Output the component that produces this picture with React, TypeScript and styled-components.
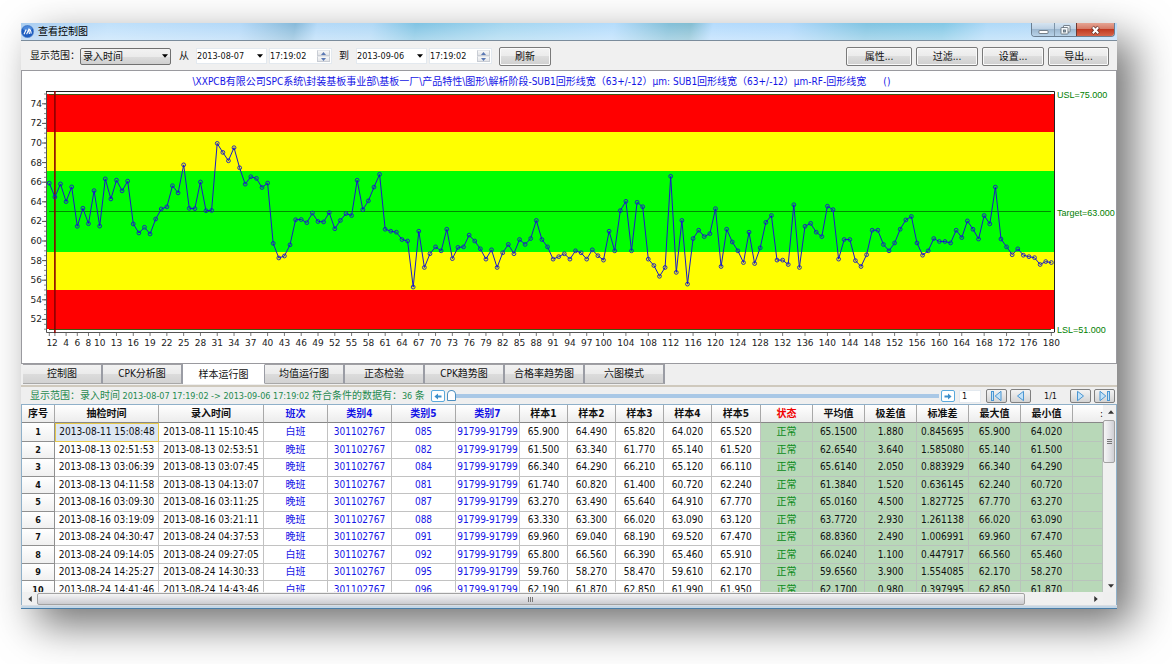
import React, { useState } from 'react';
import styled, { createGlobalStyle, css } from 'styled-components';

const uiFont = '"DejaVu Sans Condensed", "Noto Sans CJK SC", sans-serif';
const chartFont = '"DejaVu Sans", "Noto Sans CJK SC", sans-serif';

const GlobalStyle = createGlobalStyle`
  * { box-sizing: border-box; }
  body { margin: 0; background: #fff; font-family: ${uiFont}; font-size: 10px; color: #111; }
  button, input, select { font-family: inherit; font-size: inherit; color: inherit; margin: 0; }
`;

/* ---------- data ---------- */

type Row = {
  taken: string;
  entered: string;
  shift: string;
  cat5: string;
  samples: number[];
  avg: string;
  range: string;
  dev: string;
  max: string;
  min: string;
};

const rows: Row[] = [
  { taken: '2013-08-11 15:08:48', entered: '2013-08-11 15:10:45', shift: '白班', cat5: '085', samples: [65.9, 64.49, 65.82, 64.02, 65.52], avg: '65.1500', range: '1.880', dev: '0.845695', max: '65.900', min: '64.020' },
  { taken: '2013-08-13 02:51:53', entered: '2013-08-13 02:53:51', shift: '晚班', cat5: '082', samples: [61.5, 63.34, 61.77, 65.14, 61.52], avg: '62.6540', range: '3.640', dev: '1.585080', max: '65.140', min: '61.500' },
  { taken: '2013-08-13 03:06:39', entered: '2013-08-13 03:07:45', shift: '晚班', cat5: '084', samples: [66.34, 64.29, 66.21, 65.12, 66.11], avg: '65.6140', range: '2.050', dev: '0.883929', max: '66.340', min: '64.290' },
  { taken: '2013-08-13 04:11:58', entered: '2013-08-13 04:13:07', shift: '晚班', cat5: '081', samples: [61.74, 60.82, 61.4, 60.72, 62.24], avg: '61.3840', range: '1.520', dev: '0.636145', max: '62.240', min: '60.720' },
  { taken: '2013-08-16 03:09:30', entered: '2013-08-16 03:11:25', shift: '晚班', cat5: '087', samples: [63.27, 63.49, 65.64, 64.91, 67.77], avg: '65.0160', range: '4.500', dev: '1.827725', max: '67.770', min: '63.270' },
  { taken: '2013-08-16 03:19:09', entered: '2013-08-16 03:21:11', shift: '晚班', cat5: '088', samples: [63.33, 63.3, 66.02, 63.09, 63.12], avg: '63.7720', range: '2.930', dev: '1.261138', max: '66.020', min: '63.090' },
  { taken: '2013-08-24 04:30:47', entered: '2013-08-24 04:37:53', shift: '晚班', cat5: '091', samples: [69.96, 69.04, 68.19, 69.52, 67.47], avg: '68.8360', range: '2.490', dev: '1.006991', max: '69.960', min: '67.470' },
  { taken: '2013-08-24 09:14:05', entered: '2013-08-24 09:27:05', shift: '白班', cat5: '092', samples: [65.8, 66.56, 66.39, 65.46, 65.91], avg: '66.0240', range: '1.100', dev: '0.447917', max: '66.560', min: '65.460' },
  { taken: '2013-08-24 14:25:27', entered: '2013-08-24 14:30:33', shift: '白班', cat5: '095', samples: [59.76, 58.27, 58.47, 59.61, 62.17], avg: '59.6560', range: '3.900', dev: '1.554085', max: '62.170', min: '58.270' },
  { taken: '2013-08-24 14:41:46', entered: '2013-08-24 14:43:46', shift: '白班', cat5: '096', samples: [62.19, 61.87, 62.85, 61.99, 61.95], avg: '62.1700', range: '0.980', dev: '0.397995', max: '62.850', min: '61.870' },
];

const laterSamples = [
  62.9, 61.25, 62.1, 62.8, 62.6, 66.2, 63.2, 64.1, 65.5, 66.8,
  61.2, 61.0, 60.9, 60.15, 60.0, 55.3, 61.0, 57.3, 58.7, 59.4,
  59.0, 61.2, 58.2, 59.35, 59.4, 60.6, 60.0, 59.2, 58.15, 59.1,
  57.3, 58.8, 59.65, 58.7, 60.15, 59.65, 60.25, 62.1, 60.15, 59.4,
  58.15, 58.4, 58.7, 58.15, 59.0, 58.8, 58.15, 59.1, 58.5, 58.05,
  61.0, 59.0, 63.1, 64.05, 59.0, 63.95, 63.5, 58.15, 57.5, 56.4,
  57.3, 66.6, 56.8, 62.1, 55.6, 60.25, 61.1, 60.45, 60.75, 63.3,
  57.4, 61.2, 59.9, 59.0, 57.8, 60.9, 57.7, 59.3, 61.9, 62.6,
  58.05, 58.05, 57.6, 63.7, 57.3, 61.5, 61.8, 60.9, 60.45, 63.55,
  63.2, 58.15, 60.15, 60.15, 58.0, 57.4, 58.6, 61.1, 61.1, 59.65,
  59.0, 59.8, 61.2, 62.15, 62.5, 59.8, 58.55, 59.0, 60.25, 59.95,
  59.95, 59.8, 61.1, 60.35, 62.05, 61.2, 60.2, 62.6, 61.75, 65.5,
  60.2, 59.4, 58.6, 59.2, 58.55, 58.4, 58.3, 57.6, 57.9, 57.8,
];

const samples = rows.flatMap(r => r.samples).concat(laterSamples);

/* ---------- window ---------- */

const Page = styled.div`
  padding: 23px 55px 55px 21px;
`;

const Window = styled.main`
  display: flex;
  flex-direction: column;
  background: #efefef;
  box-shadow: 16px 16px 40px rgba(0, 0, 0, 0.56);
`;

const TitleBar = styled.header`
  display: flex;
  align-items: center;
  height: 18px;
  border-bottom: 1px solid #7b8c9c;
  background:
    linear-gradient(to bottom, rgba(255, 255, 255, 0), rgba(255, 255, 255, 0.35)),
    linear-gradient(100deg, #a9cdf0 0%, #bfe0fb 8%, #b2d8f8 20%, #86b9d9 25%, #b3d9f8 27%,
      #afd8f6 32%, #7fc3e3 36%, #a4d6f0 44%, #b4dcfc 54%, #82bfd8 59%, #83bdd2 61%, #b4dbfd 63%,
      #afd8fb 70%, #80c4e2 77%, #83c8e6 84%, #aed9f8 88%, #b9dafa 100%);
`;

const AppIcon = styled.svg`
  width: 13px;
  height: 13px;
  flex: none;
`;

const Title = styled.h1`
  margin: 0 0 0 4px;
  flex: 1;
  font-size: 10px;
  font-weight: 400;
  line-height: 16px;
  color: #000;
`;

const CaptionButtons = styled.div`
  display: flex;
  align-self: flex-start;
  height: 14px;
  margin-right: 2px;
  border: 1px solid #6b7f92;
  border-top: 0;
  border-radius: 0 0 4px 4px;
  overflow: hidden;
`;

const CaptionButton = styled.button<{ $close?: boolean }>`
  display: flex;
  align-items: center;
  justify-content: center;
  width: ${p => (p.$close ? 38 : 22)}px;
  padding: 0;
  border: 0;
  border-left: 1px solid ${p => (p.$close ? '#6b3a33' : '#7f95a8')};
  background: ${p =>
    p.$close
      ? 'linear-gradient(#e5a493 0%, #d67a66 45%, #c03a22 50%, #d5644a 100%)'
      : 'linear-gradient(#d5e4f1 0%, #bdd1e4 45%, #9db8d0 50%, #b8d2e8 100%)'};
  &:first-child { border-left: 0; }
  svg { display: block; }
`;

/* ---------- toolbar ---------- */

const Toolbar = styled.form`
  display: flex;
  align-items: center;
  height: 29px;
  padding: 1px 8px 0 9px;
  background: #f0f0f0;
`;

const Label = styled.label`
  line-height: 16px;
  white-space: nowrap;
`;

const Word = styled.span`
  line-height: 16px;
  margin-right: 7px;
`;

const SelectBox = styled.span`
  position: relative;
  display: flex;
  width: 91px;
  margin-right: 8px;
  svg { position: absolute; right: 3px; top: 6px; pointer-events: none; }
`;

const Select = styled.select`
  appearance: none;
  width: 100%;
  height: 17px;
  padding: 0 2px;
  border: 1px solid #707070;
  border-radius: 2px;
  background: linear-gradient(#f2f2f2 0%, #ebebeb 50%, #dddddd 51%, #cfcfcf 100%);
`;

const Field = styled.span<{ $width: number; $gap: number }>`
  display: flex;
  align-items: center;
  width: ${p => p.$width}px;
  height: 16px;
  margin-right: ${p => p.$gap}px;
  background: #fff;
  border: 1px solid #e3e9ef;
`;

const FieldInput = styled.input`
  flex: 1;
  min-width: 0;
  height: 14px;
  padding: 0;
  border: 0;
  background: none;
  font-size: 9px;
`;

const DropButton = styled.button`
  display: flex;
  align-items: center;
  justify-content: center;
  width: 12px;
  height: 14px;
  padding: 0;
  border: 0;
  background: none;
`;

const Spinner = styled.span`
  display: flex;
  flex-direction: column;
  width: 13px;
  margin-right: 1px;
`;

const SpinButton = styled.button`
  display: flex;
  align-items: center;
  justify-content: center;
  height: 6px;
  padding: 0;
  border: 1px solid #c9cdd4;
  border-top-color: #e4e6ea;
  background: linear-gradient(#f8f8f8, #e2e4e8);
`;

const PushButton = styled.button<{ $width: number }>`
  width: ${p => p.$width}px;
  height: 19px;
  padding: 1px 0 0;
  border: 1px solid #7a7a7a;
  border-radius: 2px;
  background: linear-gradient(#f3f3f3 0%, #ebebeb 49%, #dddddd 50%, #cfcfcf 100%);
  box-shadow: inset 0 0 0 1px #fafafa;
  line-height: 16px;
`;

const Actions = styled.div`
  display: flex;
  gap: 4px;
  margin-left: auto;
`;

/* ---------- chart ---------- */

const ChartPanel = styled.section`
  border: 1px solid #9a9a9f;
  background: #fff;
`;

const ChartTitle = styled.h2`
  margin: 0;
  padding-right: 55px;
  font-size: 10px;
  font-weight: 400;
  line-height: 21px;
  height: 19px;
  text-align: center;
  white-space: pre;
  color: #1414e6;
`;

const ChartSvg = styled.svg`
  display: block;
  width: 100%;
  height: auto;
  font-family: ${chartFont};
  font-size: 9px;
`;

const px = (n: number) => 27.3 + (n - 1) * 5.598;
const py = (v: number) => 4 + (75 - v) * 9.8;

const bands = [
  { top: 4, bottom: 42, color: '#ff0000' },
  { top: 42, bottom: 81, color: '#ffff00' },
  { top: 81, bottom: 162, color: '#00ff00' },
  { top: 162, bottom: 200, color: '#ffff00' },
  { top: 200, bottom: 239, color: '#ff0000' },
];

const xLabels = [1, 2, 4, 6, 8, 10];
for (let n = 13; n <= 100; n += 3) xLabels.push(n);
for (let n = 104; n <= 180; n += 4) xLabels.push(n);

const limits = [
  { text: 'USL=75.000', y: 8 },
  { text: 'Target=63.000', y: 126 },
  { text: 'LSL=51.000', y: 243 },
];

function RunChart() {
  const major = Array.from({ length: 12 }, (_, i) => 52 + i * 2);
  const minor = Array.from({ length: 49 }, (_, i) => 51 + i * 0.5);
  return (
    <ChartSvg viewBox="0 0 1094 273" role="img" aria-label="样本运行图">
      {bands.map(b => (
        <rect key={b.top} x="25" y={b.top} width="1007" height={b.bottom - b.top} fill={b.color} />
      ))}
      <path d="M24.5 1V242.5H1032.5" fill="none" stroke="#555" />
      <path d="M24 1.5H1032.5V242" fill="none" stroke="#222" />
      <path d="M27 4.5H1029" stroke="#3d5a10" />
      <path d={`M27 ${Math.round(py(51)) + 0.5}H1029`} stroke="#3d5a10" />
      <path d="M27 121.5H1029" stroke="#008a00" />
      {minor.map(v => (
        <path key={v} d={`M22 ${py(v)}h2`} stroke="#888" />
      ))}
      {major.map(v => (
        <g key={v}>
          <path d={`M20 ${py(v)}h4`} stroke="#555" />
          <text x="20" y={Math.round(py(v)) + 3} textAnchor="end" fill="#222">{v}</text>
        </g>
      ))}
      {xLabels.map(n => (
        <g key={n}>
          <path d={`M${px(n)} 243v3`} stroke="#777" />
          <text x={px(n)} y="256" textAnchor="middle" fill="#222">{n}</text>
        </g>
      ))}
      <path d={`M${px(2)} 1V243`} stroke="#8b0000" strokeWidth="1.6" />
      <polyline
        points={samples.map((v, i) => `${px(i + 1).toFixed(1)},${py(v).toFixed(1)}`).join(' ')}
        fill="none"
        stroke="#1a1ac8"
        strokeWidth="1"
      />
      {samples.map((v, i) => (
        <circle key={i} cx={px(i + 1)} cy={py(v)} r="1.9" fill="none" stroke="#1a1ac8" strokeWidth="0.9" />
      ))}
      {limits.map(l => (
        <text key={l.text} x="1035" y={l.y} fontFamily='"Liberation Sans", sans-serif' fontSize="9" fill="#008000">
          {l.text}
        </text>
      ))}
    </ChartSvg>
  );
}

/* ---------- tabs ---------- */

const TabList = styled.div`
  display: flex;
  align-items: flex-start;
  height: 21px;
  padding-left: 2px;
`;

const Tab = styled.button<{ $active: boolean }>`
  width: 80px;
  height: 20px;
  padding: 0;
  border: 0;
  border-top: 1px solid #a0a0a4;
  border-right: 2px solid #9a9ca4;
  border-bottom: 1px solid #a8a8a8;
  background: linear-gradient(#f2f2f2 0%, #ebebeb 49%, #dcdcdc 50%, #d2d2d2 100%);
  line-height: 16px;
  ${p =>
    p.$active &&
    css`
      width: 82px;
      background: #fff;
      border-top-color: #fff;
      border-bottom-color: #fff;
      border-right-width: 1px;
      padding-top: 2px;
    `}
`;

/* ---------- status row ---------- */

const StatusRow = styled.div`
  display: flex;
  align-items: center;
  height: 19px;
  padding: 1px 2px 0 9px;
  border-top: 2px solid #cfc9bd;
`;

const StatusText = styled.p`
  margin: 0;
  width: 401px;
  white-space: pre;
  line-height: 15px;
  color: #1f8a50;
`;

const Small = styled.span`
  font-size: 9px;
`;

const StepButton = styled.button`
  display: flex;
  align-items: center;
  justify-content: center;
  width: 14px;
  height: 12px;
  padding: 0;
  border: 1px solid #5aa9dc;
  border-radius: 2px;
  background: #fff;
`;

const Range = styled.input`
  appearance: none;
  flex: 1;
  min-width: 0;
  height: 14px;
  margin: 0 2px;
  background: transparent;
  &::-webkit-slider-runnable-track {
    height: 4px;
    background: #a9c8e6;
  }
  &::-webkit-slider-thumb {
    appearance: none;
    width: 9px;
    height: 11px;
    margin-top: -4px;
    border: 1px solid #4d8fc0;
    border-radius: 5px 5px 1px 1px;
    background: #fff;
  }
`;

const PageInput = styled.input`
  width: 22px;
  height: 13px;
  margin: 0 5px 0 4px;
  padding: 0 2px;
  border: 1px solid #e3e9ef;
  background: #fff;
  font-size: 9px;
`;

const PagerGroup = styled.div`
  display: flex;
  gap: 3px;
`;

const PagerButton = styled.button`
  display: flex;
  align-items: center;
  justify-content: center;
  width: 21px;
  height: 14px;
  padding: 0;
  border: 1px solid #808080;
  border-radius: 2px;
  background: linear-gradient(#f3f3f3, #d4d4d4);
`;

const PageCount = styled.span`
  width: 39px;
  text-align: center;
  font-size: 9px;
`;

/* ---------- data grid ---------- */

const GridFrame = styled.section`
  display: grid;
  grid-template-columns: minmax(0, 1fr) 13px;
  grid-template-rows: 187px 13px;
  border: 1px solid #8fb0c9;
  border-bottom: 0;
`;

const TableView = styled.div`
  overflow: hidden;
  background: #fff;
`;

const Table = styled.table`
  width: 100%;
  height: 194px;
  table-layout: fixed;
  border-collapse: separate;
  border-spacing: 0;
  font-size: 10px;
  line-height: 14px;
  text-align: center;
`;

const HeadCell = styled.th<{ $color?: string; $cut?: boolean }>`
  height: 18px;
  padding: 0;
  border-right: 1px solid #a8a8a8;
  border-bottom: 1px solid #888;
  background: linear-gradient(#ffffff, #ececec);
  color: ${p => p.$color ?? '#111'};
  font-weight: 700;
  white-space: nowrap;
  overflow: hidden;
  ${p => p.$cut && css`text-align: right; border-right: 0; font-weight: 400;`}
`;

const RowHead = styled.th`
  padding: 0;
  border-right: 1px solid #909090;
  border-bottom: 1px solid #909090;
  background: linear-gradient(#ffffff, #f0f0f0);
  font-size: 9px;
  font-weight: 700;
`;

const Cell = styled.td<{ $tone?: 'link' | 'ok' | 'calc'; $selected?: boolean }>`
  padding: 0;
  border-right: 1px solid #c2c2c2;
  border-bottom: 1px solid #c2c2c2;
  white-space: nowrap;
  ${p => p.$tone === 'link' && css`color: #1414e6;`}
  ${p => (p.$tone === 'ok' || p.$tone === 'calc') && css`background: #b8d8b8; border-color: #b9c3bc;`}
  ${p => p.$tone === 'ok' && css`color: #0a8a1a;`}
  ${p => p.$selected && css`background: #dde7f3; border: 1px solid #e6c84a;`}
`;

const ScrollBar = styled.div<{ $vertical?: boolean }>`
  display: flex;
  flex-direction: ${p => (p.$vertical ? 'column' : 'row')};
  background: #f0f0f0;
`;

const ScrollArrow = styled.button`
  display: flex;
  align-items: center;
  justify-content: center;
  width: 15px;
  height: 13px;
  padding: 0;
  border: 0;
  background: none;
  flex: none;
`;

const ScrollTrack = styled.div<{ $vertical?: boolean }>`
  flex: 1;
  display: flex;
  flex-direction: ${p => (p.$vertical ? 'column' : 'row')};
  margin: ${p => (p.$vertical ? '2px 0 0' : '1px 0 0')};
`;

const ScrollThumb = styled.div<{ $vertical?: boolean }>`
  display: flex;
  align-items: center;
  justify-content: center;
  border: 1px solid #a2a2a2;
  border-radius: 2px;
  ${p =>
    p.$vertical
      ? css`width: 12px; height: 43px; background: linear-gradient(90deg, #f5f5f5, #e4e4e8 50%, #cfcfd4);`
      : css`width: 94%; height: 12px; background: linear-gradient(#f5f5f5, #e0e0e4 50%, #cbcbcf);`}
`;

const BottomEdge = styled.div`
  height: 4px;
  background: #c3d6e6;
  border-bottom: 1px solid #4a7ea8;
  border-top: 1px solid #d9dde2;
`;

/* ---------- small drawings ---------- */

type Dir = 'up' | 'down' | 'left' | 'right';
const arrowPaths: Record<Dir, string> = {
  up: 'M0 3.5L3 0L6 3.5Z',
  down: 'M0 0H6L3 3.5Z',
  left: 'M3.5 0V6L0 3Z',
  right: 'M0 0V6L3.5 3Z',
};

function Triangle({ dir, color = '#333', size = 6 }: { dir: Dir; color?: string; size?: number }) {
  const side = dir === 'left' || dir === 'right';
  return (
    <svg
      width={side ? Math.round(size * 0.6) : size}
      height={side ? size : Math.round(size * 0.6)}
      viewBox={side ? '0 0 3.5 6' : '0 0 6 3.5'}
      aria-hidden="true"
    >
      <path d={arrowPaths[dir]} fill={color} />
    </svg>
  );
}

function BlueArrow({ flip }: { flip?: boolean }) {
  return (
    <svg width="8" height="7" viewBox="0 0 8 7" aria-hidden="true">
      <path d={flip ? 'M0.5 2.6H4V0.6L7.6 3.5L4 6.4V4.4H0.5Z' : 'M7.5 2.6H4V0.6L0.4 3.5L4 6.4V4.4H7.5Z'} fill="#3c8fcb" />
    </svg>
  );
}

function PagerIcon({ flip, bar }: { flip?: boolean; bar?: boolean }) {
  return (
    <svg width="13" height="12" viewBox="0 0 13 12" aria-hidden="true">
      <g transform={flip ? 'translate(13 0) scale(-1 1)' : undefined} fill="#c3e2f8" stroke="#4a96d2" strokeWidth="1">
        {bar && <rect x="1.5" y="1.5" width="2" height="9" />}
        <path d={bar ? 'M11 1.3V10.7L5.2 6Z' : 'M9.5 1.3V10.7L3.5 6Z'} />
      </g>
    </svg>
  );
}

function Grip({ vertical }: { vertical?: boolean }) {
  return (
    <svg width="7" height="7" viewBox="0 0 7 7" aria-hidden="true">
      <path d={vertical ? 'M1 1.5H6M1 3.5H6M1 5.5H6' : 'M1.5 1V6M3.5 1V6M5.5 1V6'} stroke="#777" />
    </svg>
  );
}

function DateField({ label, value }: { label: string; value: string }) {
  return (
    <Field $width={71} $gap={2}>
      <FieldInput aria-label={label} defaultValue={value} />
      <DropButton type="button" aria-label="选择日期"><Triangle dir="down" color="#000" /></DropButton>
    </Field>
  );
}

function TimeField({ label, value }: { label: string; value: string }) {
  return (
    <Field $width={63} $gap={7}>
      <FieldInput aria-label={label} defaultValue={value} />
      <Spinner>
        <SpinButton type="button" aria-label="增加"><Triangle dir="up" color="#5a78b4" size={5} /></SpinButton>
        <SpinButton type="button" aria-label="减少"><Triangle dir="down" color="#5a78b4" size={5} /></SpinButton>
      </Spinner>
    </Field>
  );
}

/* ---------- page ---------- */

const tabs = ['控制图', 'CPK分析图', '样本运行图', '均值运行图', '正态检验', 'CPK趋势图', '合格率趋势图', '六图模式'];

const columns: { title: string; width?: number; color?: string; cut?: boolean }[] = [
  { title: '序号', width: 33 },
  { title: '抽检时间', width: 104 },
  { title: '录入时间', width: 105 },
  { title: '班次', width: 64, color: '#1414e6' },
  { title: '类别4', width: 64, color: '#1414e6' },
  { title: '类别5', width: 64, color: '#1414e6' },
  { title: '类别7', width: 64, color: '#1414e6' },
  { title: '样本1', width: 48 },
  { title: '样本2', width: 48 },
  { title: '样本3', width: 48 },
  { title: '样本4', width: 48 },
  { title: '样本5', width: 49 },
  { title: '状态', width: 52, color: '#f00000' },
  { title: '平均值', width: 52 },
  { title: '极差值', width: 52 },
  { title: '标准差', width: 52 },
  { title: '最大值', width: 52 },
  { title: '最小值', width: 52 },
  { title: ':', cut: true },
];

export default function App() {
  const [active, setActive] = useState(2);
  return (
    <Page>
      <GlobalStyle />
      <Window>
        <TitleBar>
          <AppIcon viewBox="0 0 13 13" aria-hidden="true">
            <circle cx="6.5" cy="6.5" r="6.2" fill="#1c5cc0" stroke="#5f8fd0" strokeWidth="0.6" />
            <ellipse cx="6.5" cy="3.6" rx="4.4" ry="2.6" fill="#5f9be6" opacity="0.7" />
            <path d="M3 9.2L5.2 4.6M5.6 9.2L7.8 4.4L8.4 9M8.2 4.4Q9.8 4.6 10.2 8.6" fill="none" stroke="#fff" strokeWidth="1.1" />
          </AppIcon>
          <Title>查看控制图</Title>
          <CaptionButtons>
            <CaptionButton aria-label="最小化">
              <svg width="11" height="12" viewBox="0 0 11 12"><rect x="1" y="6.5" width="9" height="3" rx="0.5" fill="#fff" stroke="#5a6670" strokeWidth="0.8" /></svg>
            </CaptionButton>
            <CaptionButton aria-label="还原">
              <svg width="11" height="12" viewBox="0 0 11 12" fill="#f4f8fb" stroke="#5a6670" strokeWidth="0.8">
                <rect x="3.5" y="1.5" width="6.5" height="6.5" rx="0.6" />
                <rect x="1" y="3.5" width="7" height="6.5" rx="0.6" />
                <rect x="3.5" y="6" width="2" height="2" fill="#8fa9bf" />
              </svg>
            </CaptionButton>
            <CaptionButton $close aria-label="关闭">
              <svg width="11" height="12" viewBox="0 0 11 12">
                <path d="M2.5 3L8.5 9.5M8.5 3L2.5 9.5" stroke="#5c2a24" strokeWidth="3.4" />
                <path d="M2.8 3.3L8.2 9.2M8.2 3.3L2.8 9.2" stroke="#fff" strokeWidth="2.1" />
              </svg>
            </CaptionButton>
          </CaptionButtons>
        </TitleBar>

        <Toolbar onSubmit={e => e.preventDefault()}>
          <Label htmlFor="scope">显示范围：</Label>
          <SelectBox>
            <Select id="scope" defaultValue="录入时间">
              <option>录入时间</option>
            </Select>
            <Triangle dir="down" color="#000" />
          </SelectBox>
          <Word>从</Word>
          <DateField label="开始日期" value="2013-08-07" />
          <TimeField label="开始时间" value="17:19:02" />
          <Word>到</Word>
          <DateField label="结束日期" value="2013-09-06" />
          <TimeField label="结束时间" value="17:19:02" />
          <PushButton type="submit" $width={52}>刷新</PushButton>
          <Actions>
            <PushButton type="button" $width={66}>属性...</PushButton>
            <PushButton type="button" $width={62}>过滤...</PushButton>
            <PushButton type="button" $width={62}>设置...</PushButton>
            <PushButton type="button" $width={61}>导出...</PushButton>
          </Actions>
        </Toolbar>

        <ChartPanel>
          <ChartTitle>
            {'\\XXPCB有限公司SPC系统\\封装基板事业部\\基板一厂\\产品特性\\图形\\解析阶段-SUB1回形线宽（63+/-12）µm: SUB1回形线宽（63+/-12）µm-RF-回形线宽      ()'}
          </ChartTitle>
          <RunChart />
        </ChartPanel>

        <TabList role="tablist">
          {tabs.map((t, i) => (
            <Tab key={t} role="tab" aria-selected={i === active} $active={i === active} onClick={() => setActive(i)}>
              {t}
            </Tab>
          ))}
        </TabList>

        <StatusRow>
          <StatusText>
            显示范围：录入时间<Small>{' 2013-08-07 17:19:02 -> 2013-09-06 17:19:02 '}</Small>符合条件的数据有：<Small>36 </Small>条
          </StatusText>
          <StepButton aria-label="后退"><BlueArrow /></StepButton>
          <Range type="range" min={0} max={100} defaultValue={0} aria-label="位置" />
          <StepButton aria-label="前进"><BlueArrow flip /></StepButton>
          <PageInput aria-label="页码" defaultValue="1" />
          <PagerGroup>
            <PagerButton aria-label="首页"><PagerIcon bar /></PagerButton>
            <PagerButton aria-label="上一页"><PagerIcon /></PagerButton>
          </PagerGroup>
          <PageCount>1/1</PageCount>
          <PagerGroup>
            <PagerButton aria-label="下一页"><PagerIcon flip /></PagerButton>
            <PagerButton aria-label="末页"><PagerIcon flip bar /></PagerButton>
          </PagerGroup>
        </StatusRow>

        <GridFrame>
          <TableView>
            <Table>
              <colgroup>
                {columns.map((c, i) => (
                  <col key={i} width={c.width} />
                ))}
              </colgroup>
              <thead>
                <tr>
                  {columns.map((c, i) => (
                    <HeadCell key={i} scope="col" $color={c.color} $cut={c.cut}>{c.title}</HeadCell>
                  ))}
                </tr>
              </thead>
              <tbody>
                {rows.map((r, i) => (
                  <tr key={r.taken}>
                    <RowHead scope="row">{i + 1}</RowHead>
                    <Cell $selected={i === 0}>{r.taken}</Cell>
                    <Cell>{r.entered}</Cell>
                    <Cell $tone="link">{r.shift}</Cell>
                    <Cell $tone="link">301102767</Cell>
                    <Cell $tone="link">{r.cat5}</Cell>
                    <Cell $tone="link">91799-91799</Cell>
                    {r.samples.map((s, k) => (
                      <Cell key={k}>{s.toFixed(3)}</Cell>
                    ))}
                    <Cell $tone="ok">正常</Cell>
                    <Cell $tone="calc">{r.avg}</Cell>
                    <Cell $tone="calc">{r.range}</Cell>
                    <Cell $tone="calc">{r.dev}</Cell>
                    <Cell $tone="calc">{r.max}</Cell>
                    <Cell $tone="calc">{r.min}</Cell>
                    <Cell $tone="calc" />
                  </tr>
                ))}
              </tbody>
            </Table>
          </TableView>
          <ScrollBar $vertical>
            <ScrollArrow aria-label="向上滚动"><Triangle dir="up" /></ScrollArrow>
            <ScrollTrack $vertical>
              <ScrollThumb $vertical><Grip vertical /></ScrollThumb>
            </ScrollTrack>
            <ScrollArrow aria-label="向下滚动"><Triangle dir="down" /></ScrollArrow>
          </ScrollBar>
          <ScrollBar>
            <ScrollArrow aria-label="向左滚动"><Triangle dir="left" /></ScrollArrow>
            <ScrollTrack>
              <ScrollThumb><Grip /></ScrollThumb>
            </ScrollTrack>
            <ScrollArrow aria-label="向右滚动"><Triangle dir="right" /></ScrollArrow>
          </ScrollBar>
        </GridFrame>
        <BottomEdge />
      </Window>
    </Page>
  );
}
